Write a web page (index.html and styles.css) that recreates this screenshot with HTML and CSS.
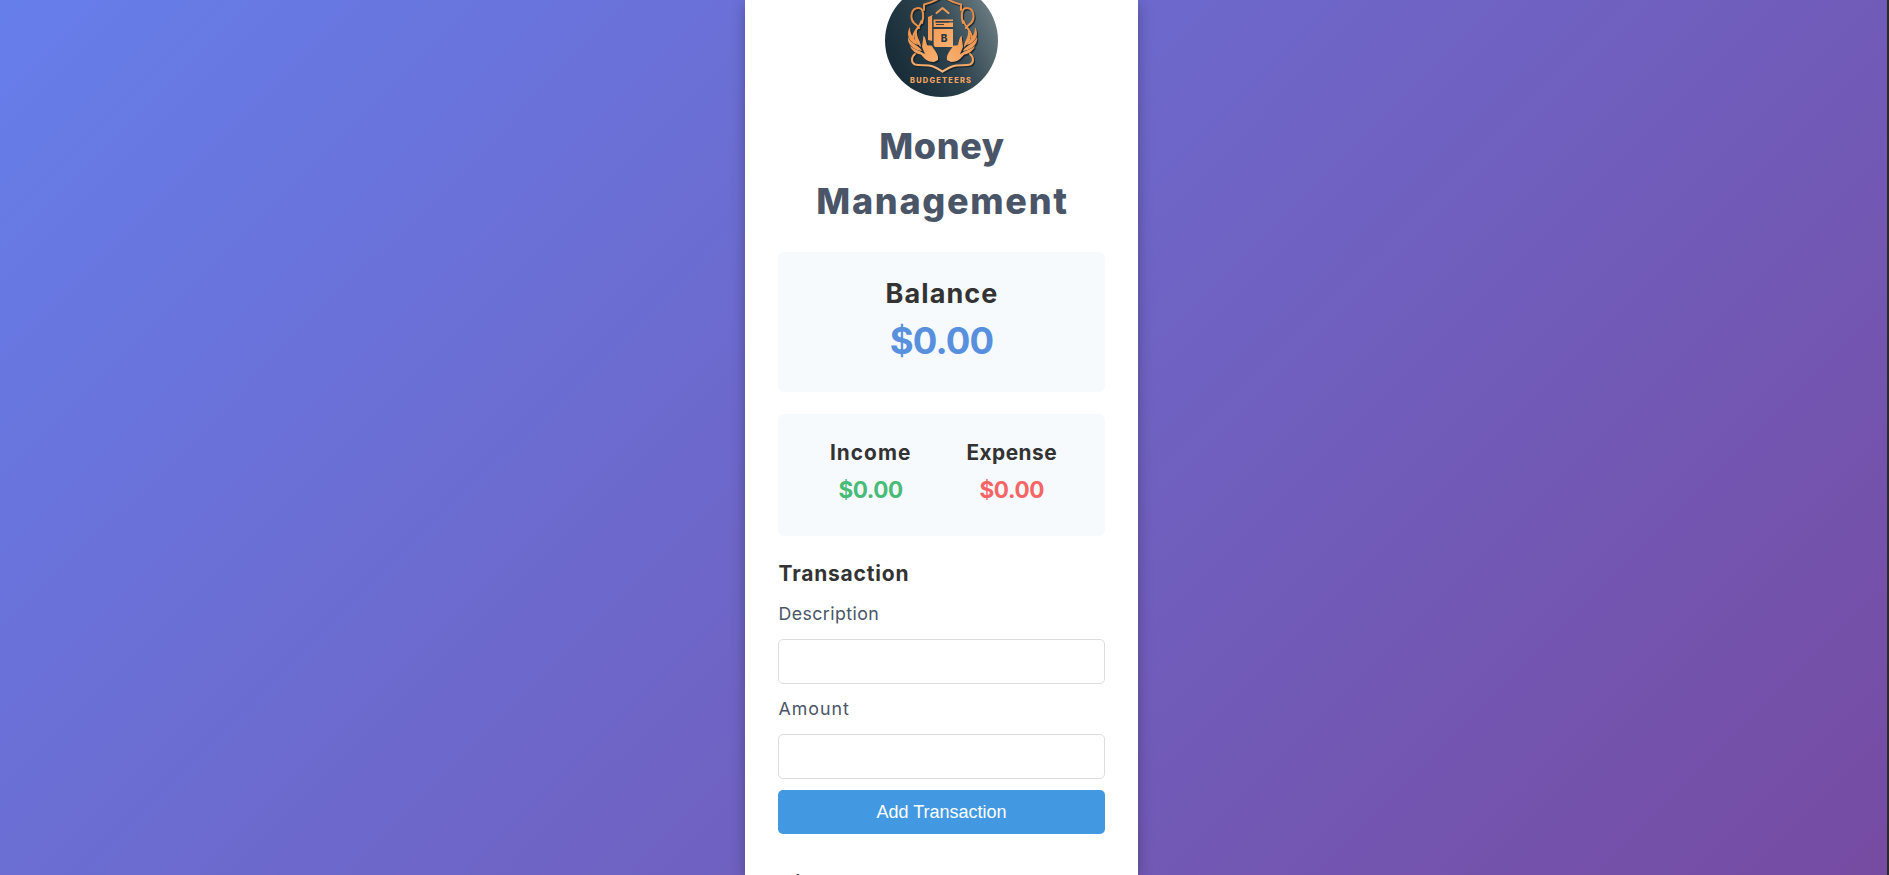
FILE: index.html
```html
<!DOCTYPE html>
<html lang="en">
<head>
<meta charset="utf-8">
<title>Money Management</title>
<link rel="stylesheet" href="styles.css">
</head>
<body>
<div class="page">
<main class="card">
  <svg class="logo" viewBox="0 0 113 97" role="img" aria-label="Budgeteers logo">
    <defs>
      <linearGradient id="disc" x1="0.1" y1="0.7" x2="1" y2="0.25">
        <stop offset="0" stop-color="#1a2e39"/><stop offset="0.45" stop-color="#2b414c"/><stop offset="1" stop-color="#6f7f84"/>
      </linearGradient>
      <linearGradient id="gold" gradientUnits="userSpaceOnUse" x1="24" y1="0" x2="90" y2="60">
        <stop offset="0" stop-color="#e0843d"/><stop offset="0.5" stop-color="#f5a25e"/><stop offset="1" stop-color="#fbc38a"/>
      </linearGradient>
      <g id="wreath">
        <path class="line" d="M57.500-4C52 0 46 3 39 4.500V10"/>
        <path class="line" d="M37 23C39 17 39 8 33.500 8C26 8 24.500 18 29 23C31 25 33 26 34 28"/>
        <path class="line" d="M36.500 21C35 27 28 31 28 38"/>
        <path class="leaf" d="M25 27C20 35 25 43 33 45C31 39 25 37 25 27Z"/>
        <path class="leaf" d="M32 30C26 37 31 43 36 47C36 41 31 38 32 30Z"/>
        <path class="leaf" d="M23 37C22 46 30 50 37 51C34 45 27 45 23 37Z"/>
        <path class="leaf" d="M25 46C28 53 34 55 40 55C36 50 31 51 25 46Z"/>
        <path class="line" d="M30 54C26 57 26 63 30 64.500C36 66 42 64 48 66.500C52 68 55 70 57.500 71.500"/>
        <path class="leaf" d="M38.500 35.500C41 38 41 42 42 45C44 46 46 45 47 46C49 50 54 54 53 60L49 62C41 62 38 57 34 52L40 54L37 47Z"/>
      </g>
    </defs>
    <circle cx="56.5" cy="40.5" r="56.5" fill="url(#disc)"/>
    <g class="shade" transform="translate(1.2 1.400)">
      <use href="#wreath"/><use href="#wreath" transform="matrix(-1 0 0 1 115 0)"/>
    </g>
    <g class="metal">
      <use href="#wreath"/><use href="#wreath" transform="matrix(-1 0 0 1 115 0)"/>
      <path class="line" d="M51.500 13L57.500 8L63.500 13"/>
      <path class="leaf" d="M43 17L47.500 15V41L43 40ZM48.500 19.500H68V21H51V22.500H68V27H48.500ZM48.500 29H68V47H50L48.500 45Z"/>
    </g>
    <path class="ink" d="M47.800 16V46M50 22H64M51 24.500H59M49 28H68.500"/>
    <text class="logo-letter" x="59" y="41.5">B</text>
    <text class="logo-name" x="25" y="82.6" textLength="61">BUDGETEERS</text>
  </svg>
  <h1 class="title"><span class="title-money">Money</span><span class="title-management">Management</span></h1>
  <section class="panel balance">
    <h2 class="balance-title">Balance</h2>
    <p class="balance-value">$0.00</p>
  </section>
  <section class="panel totals">
    <div class="total"><h3 class="total-title income-title">Income</h3><p class="total-value income">$0.00</p></div>
    <div class="total"><h3 class="total-title expense-title">Expense</h3><p class="total-value expense">$0.00</p></div>
  </section>
  <h3 class="section-title">Transaction</h3>
  <form class="form">
    <label class="label" for="description">Description</label>
    <input class="field" id="description" type="text">
    <label class="label amount" for="amount">Amount</label>
    <input class="field" id="amount" type="text">
    <button class="submit" type="button">Add Transaction</button>
  </form>
  <h3 class="section-title history">History</h3>
</main>
</div>
</body>
</html>
```
FILE: styles.css
```css
* { box-sizing: border-box; margin: 0; padding: 0; }
body {
  height: 875px;
  overflow: hidden;
  padding-right: 2px;
  background: #2b2b2b;
  color: #333;
  font-family: Inter, "Open Sans", sans-serif;
}
.page {
  height: 875px;
  overflow: hidden;
  padding-left: 745px;
  background: linear-gradient(135deg, #667eea 0%, #764ba2 100%);
}
.card {
  width: 393px;
  height: 875px;
  overflow: hidden;
  padding: 0 33px;
  background: #fff;
  box-shadow: 0 4px 13px rgba(0, 0, 0, .28);
}
.logo { display: block; width: 113px; height: 97px; margin: 0 auto; }
.metal { fill: url(#gold); stroke: url(#gold); }
.shade { fill: #0f1c24; stroke: #0f1c24; opacity: .7; }
.line { fill: none; stroke-width: 2; stroke-linecap: round; stroke-linejoin: round; }
.leaf { stroke: none; }
.ink { fill: none; stroke: #273842; stroke-width: .9; }
.logo-letter { font: 800 10px Inter, sans-serif; fill: #273842; text-anchor: middle; }
.logo-name { font: 800 7.4px Inter, sans-serif; fill: #f3a35f; }
.title {
  padding-top: 22px;
  color: #4a5568;
  font-size: 36px;
  font-weight: 800;
  line-height: 55px;
  text-align: center;
}
.title span { display: block; }
.title-money { padding-left: 1px; letter-spacing: .6px; }
.title-management { letter-spacing: 1.7px; padding-left: 2px; }
.panel { border-radius: 6px; background: #f7fafc; text-align: center; }
.balance { height: 140px; margin-top: 23px; padding-top: 22px; }
.balance-title { padding-left: 1px; font-size: 27px; line-height: 40px; letter-spacing: 1.1px; }
.balance-value { color: #5890de; font-size: 36.5px; line-height: 54px; font-weight: 700; letter-spacing: -.9px; }
.totals {
  display: flex;
  justify-content: center;
  gap: 55px;
  height: 122px;
  margin-top: 22px;
  padding: 22px 0 0 4px;
}
.total-title { font-size: 20.8px; line-height: 33px; }
.income-title { letter-spacing: 1.05px; }
.expense-title { letter-spacing: .5px; }
.total-value { font-size: 22.5px; line-height: 42px; font-weight: 700; letter-spacing: -.4px; }
.income { color: #48bb78; }
.expense { color: #f56565; }
.section-title { margin-top: 21px; padding-left: .5px; font-size: 21px; line-height: 33px; letter-spacing: .8px; }
.form { display: flex; flex-direction: column; }
.label { margin-top: 10px; padding-left: .5px; color: #4a5568; font-size: 17.8px; line-height: 28px; letter-spacing: .4px; }
.amount { margin-top: 11px; letter-spacing: 1px; }
.field { height: 45px; margin-top: 11px; border: 1px solid #ddd; border-radius: 5px; }
.submit {
  height: 44px;
  margin-top: 11px;
  border: 0;
  border-radius: 5px;
  background: #4299e1;
  color: #fff;
  font: 18px "Liberation Sans", Arial, sans-serif;
}
.history { margin-top: 33px; }
```
